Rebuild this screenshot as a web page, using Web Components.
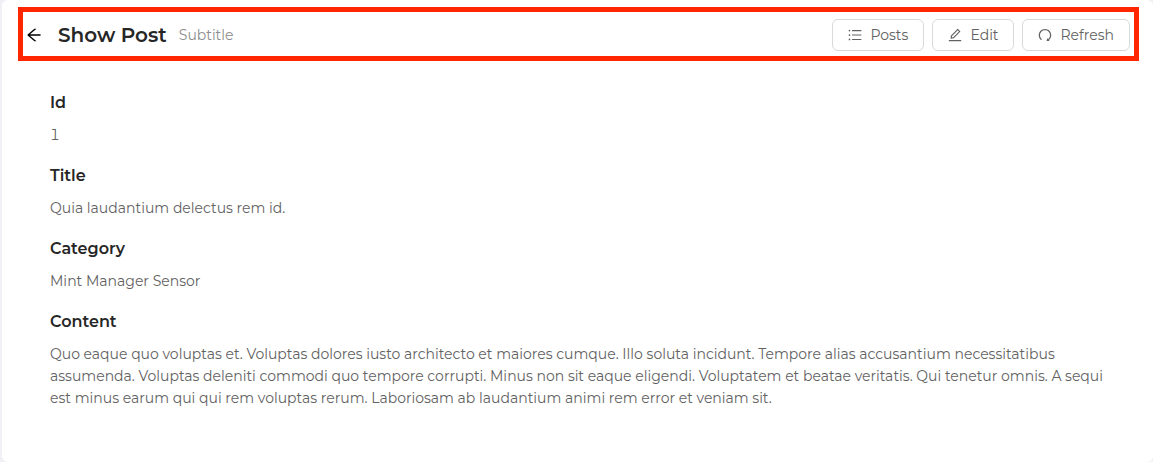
<!DOCTYPE html>
<html lang="en">
<head>
<meta charset="utf-8">
<title>Show Post</title>
<style>
html { background: #f0f0f7; }
body { margin: 0; font-family: Montserrat, Inter, "Open Sans", sans-serif; font-variant-numeric: tabular-nums; color: #262626; }
</style>
</head>
<body>
<show-page>
  <page-header slot="header">
    <span slot="title">Show Post</span>
    <span slot="subtitle">Subtitle</span>
    <action-button slot="actions" icon="list">Posts</action-button>
    <action-button slot="actions" icon="edit">Edit</action-button>
    <action-button slot="actions" icon="redo">Refresh</action-button>
  </page-header>
  <post-field label="Id">1</post-field>
  <post-field label="Title">Quia laudantium delectus rem id.</post-field>
  <post-field label="Category">Mint Manager Sensor</post-field>
  <post-field label="Content">Quo eaque quo voluptas et. Voluptas dolores iusto architecto et maiores cumque. Illo soluta incidunt. Tempore alias accusantium necessitatibus assumenda. Voluptas deleniti commodi quo tempore corrupti. Minus non sit eaque eligendi. Voluptatem et beatae veritatis. Qui tenetur omnis. A sequi est minus earum qui qui rem voluptas rerum. Laboriosam ab laudantium animi rem error et veniam sit.</post-field>
</show-page>
<script>
const ICONS = {
  back: 'M872 474H286.9l350.2-304c5.6-4.9 2.2-14-5.2-14h-88.5c-3.9 0-7.6 1.4-10.5 3.9L155 487.8a31.96 31.96 0 000 48.3L535.1 866c1.5 1.3 3.3 2 5.2 2h91.5c7.4 0 10.8-9.2 5.2-14L286.9 550H872c4.4 0 8-3.6 8-8v-60c0-4.4-3.6-8-8-8z',
  list: 'M912 192H328c-4.4 0-8 3.6-8 8v56c0 4.4 3.6 8 8 8h584c4.4 0 8-3.6 8-8v-56c0-4.4-3.6-8-8-8zm0 284H328c-4.4 0-8 3.6-8 8v56c0 4.4 3.6 8 8 8h584c4.4 0 8-3.6 8-8v-56c0-4.4-3.6-8-8-8zm0 284H328c-4.4 0-8 3.6-8 8v56c0 4.4 3.6 8 8 8h584c4.4 0 8-3.6 8-8v-56c0-4.4-3.6-8-8-8zM104 228a56 56 0 10112 0 56 56 0 10-112 0zm0 284a56 56 0 10112 0 56 56 0 10-112 0zm0 284a56 56 0 10112 0 56 56 0 10-112 0z',
  edit: 'M257.7 752c2 0 4-.2 6-.5L431.9 722c2-.4 3.9-1.3 5.3-2.8l423.9-423.9a9.96 9.96 0 000-14.1L694.9 114.9c-1.9-1.9-4.4-2.9-7.1-2.9s-5.2 1-7.1 2.9L256.8 538.8c-1.5 1.5-2.4 3.3-2.8 5.3l-29.5 168.2a33.5 33.5 0 009.4 29.8c6.6 6.4 14.9 9.9 23.8 9.9zm67.4-174.4L687.8 215l73.3 73.3-362.7 362.6-88.9 15.7 15.6-89zM880 836H144c-17.7 0-32 14.3-32 32v36c0 4.4 3.6 8 8 8h784c4.4 0 8-3.6 8-8v-36c0-17.7-14.3-32-32-32z',
  redo: 'M758.2 839.1C851.8 765.9 912 651.9 912 523.9 912 303 733.5 124.3 512.6 124 291.4 123.7 112 302.8 112 523.9c0 125.2 57.5 236.9 147.6 310.2 3.5 2.8 8.6 2.2 11.4-1.3l39.4-50.5c2.7-3.4 2.1-8.3-1.2-11.1-8.1-6.6-15.9-13.7-23.4-21.2a318.64 318.64 0 01-68.6-101.7C200.4 609 192 567.1 192 523.9s8.4-85.1 25.1-124.5c16.1-38.1 39.2-72.3 68.6-101.7 29.4-29.4 63.6-52.5 101.7-68.6C426.9 212.4 468.8 204 512 204s85.1 8.4 124.5 25.1c38.1 16.1 72.3 39.2 101.7 68.6 29.4 29.4 52.5 63.6 68.6 101.7 16.7 39.4 25.1 81.3 25.1 124.5s-8.4 85.1-25.1 124.5a318.64 318.64 0 01-68.6 101.7c-9.3 9.3-19.1 18-29.3 26L668.2 724a8 8 0 00-14.1 3l-39.6 162.2c-1.2 5 2.6 9.9 7.7 9.9l167 .8c6.7 0 10.5-7.7 6.3-12.9l-37.3-47.9z'
};
const icon = name => `<svg viewBox="64 64 896 896" fill="currentColor" aria-hidden="true"><path d="${ICONS[name]}"/></svg>`;

customElements.define('show-page', class extends HTMLElement {
  constructor() {
    super();
    this.attachShadow({ mode: 'open' }).innerHTML = `
      <style>
        :host { display: block; box-sizing: border-box; min-height: 100vh; margin-left: 2px; padding: 7px 14px 48px 16px; background: #fff; border-radius: 6px; }
        main { display: flex; flex-direction: column; gap: 18px; padding: 30px 32px 0; }
      </style>
      <slot name="header"></slot>
      <main><slot></slot></main>`;
  }
});

customElements.define('page-header', class extends HTMLElement {
  constructor() {
    super();
    this.attachShadow({ mode: 'open' }).innerHTML = `
      <style>
        :host { display: block; border: 5px solid #ff2600; }
        header { display: flex; align-items: center; padding: 7px 4px 5px 3px; }
        .back { display: flex; margin: 0 16px 0 0; padding: 0; border: 0; background: none; color: #000; cursor: pointer; }
        .back svg { width: 16px; height: 16px; }
        h1 { margin: 0 12px 0 0; font-size: 20px; line-height: 32px; font-weight: 600; }
        .sub { font-size: 14px; line-height: 22px; color: #8c8c8c; }
        .actions { display: flex; gap: 8px; margin-left: auto; }
      </style>
      <header>
        <button class="back" type="button" aria-label="Back">${icon('back')}</button>
        <h1><slot name="title"></slot></h1>
        <div class="sub"><slot name="subtitle"></slot></div>
        <div class="actions"><slot name="actions"></slot></div>
      </header>`;
  }
});

customElements.define('action-button', class extends HTMLElement {
  constructor() {
    super();
    this.attachShadow({ mode: 'open' }).innerHTML = `
      <style>
        :host { display: block; }
        button { display: flex; align-items: center; gap: 8px; height: 32px; padding: 0 15px; border: 1px solid #d9d9d9; border-radius: 6px; background: #fff; color: #626262; font-family: inherit; font-size: 14px; line-height: 22px; cursor: pointer; }
        svg { width: 14px; height: 14px; }
      </style>
      <button type="button">${icon(this.getAttribute('icon'))}<span><slot></slot></span></button>`;
  }
});

customElements.define('post-field', class extends HTMLElement {
  constructor() {
    super();
    this.attachShadow({ mode: 'open' }).innerHTML = `
      <style>
        :host { display: block; }
        h2 { margin: 0 0 9px; font-size: 16px; line-height: 24px; font-weight: 600; }
        p { margin: 0; font-size: 14px; line-height: 22px; color: #626262; }
      </style>
      <h2>${this.getAttribute('label')}</h2>
      <p><slot></slot></p>`;
  }
});
</script>
</body>
</html>
